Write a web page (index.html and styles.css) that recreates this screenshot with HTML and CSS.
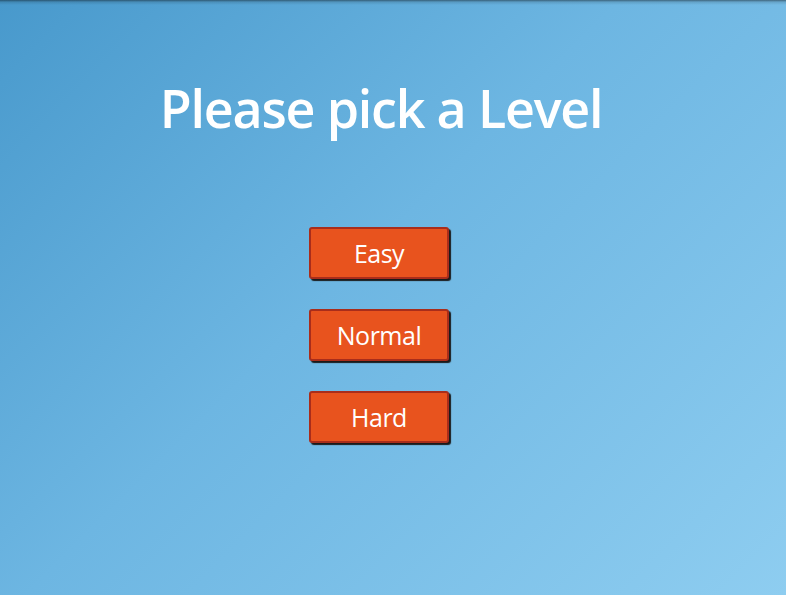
FILE: index.html
```html
<!DOCTYPE html>
<html>
<head>
<meta charset="utf-8">
<link rel="stylesheet" href="styles.css">
</head>
<body>
<main class="screen">
  <h1 class="title">Please pick a Level</h1>
  <div class="levels">
    <button class="level-btn">Easy</button>
    <button class="level-btn">Normal</button>
    <button class="level-btn">Hard</button>
  </div>
</main>
</body>
</html>
```
FILE: styles.css
```css
html, body {
  margin: 0;
  padding: 0;
  height: 100%;
}
body {
  font-family: "Open Sans", "Liberation Sans", sans-serif;
  background:
    linear-gradient(to bottom, rgba(0, 0, 0, 0.45) 0px, rgba(0, 0, 0, 0.12) 2px, rgba(0, 0, 0, 0) 5px),
    linear-gradient(135deg, #4899cc 0%, #6db6e2 45%, #8ecdf0 100%);
  overflow: hidden;
}
.screen {
  display: flex;
  flex-direction: column;
  align-items: center;
  width: 762px;
  padding-top: 72px;
}
.title {
  margin: 0;
  color: #ffffff;
  font-size: 52px;
  font-weight: 600;
  letter-spacing: -1.2px;
  line-height: 72px;
}
.levels {
  display: flex;
  flex-direction: column;
  align-items: center;
  gap: 30px;
  margin-top: 83px;
  margin-right: 4px;
}
.level-btn {
  width: 140px;
  height: 52px;
  box-sizing: border-box;
  background: #e8531e;
  border: 2px solid #a92d1b;
  border-radius: 3px;
  box-shadow: 2px 2px 1px #1a1a1a;
  color: #ffffff;
  font-family: "Open Sans", "Liberation Sans", sans-serif;
  font-size: 25px;
  letter-spacing: -0.5px;
  padding: 0;
  margin: 0;
}
```
